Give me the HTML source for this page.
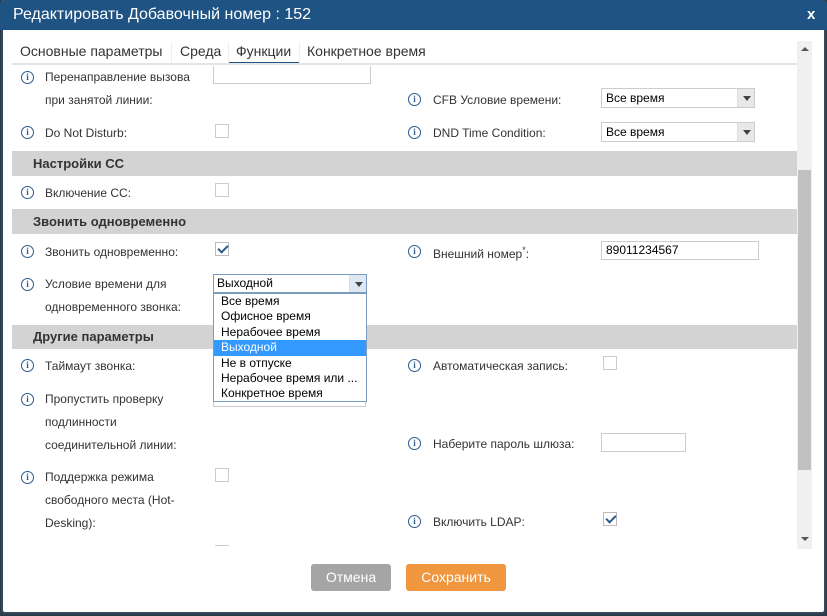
<!DOCTYPE html>
<html><head><meta charset="utf-8"><style>
*{margin:0;padding:0;box-sizing:border-box}
body{width:827px;height:616px;background:#2b3a48;font-family:"Liberation Sans",Arial,sans-serif;font-size:12px;color:#333;position:relative;overflow:hidden}
.dlg{position:absolute;left:1px;top:0;width:825px;height:614px;background:#fff;border:2px solid #34495e;border-top:none;border-radius:0 0 4px 4px}
.hdr{position:absolute;left:0;top:0;width:827px;height:30px;background:#1f5383;color:#fff;font-size:16px;border-radius:4px 4px 0 0}
.a{position:absolute;white-space:nowrap}
.i{position:absolute;width:13px;height:13px;border:1.5px solid #2c5a8a;border-radius:50%;color:#2c5a8a;font-size:9px;font-weight:bold;text-align:center;line-height:10px;font-family:"Liberation Serif",serif}
.sec{position:absolute;left:12px;width:785px;background:#d3d3d3;font-weight:bold;font-size:13px;color:#333;padding-left:21px}
.cb{position:absolute;width:14px;height:14px;border:1px solid #ccc;background:#fff}
.ck{border-color:#bbb}
.ck:after{content:"";position:absolute;left:4px;top:0px;width:4px;height:8px;border:solid #2c5a8a;border-width:0 2px 2px 0;transform:rotate(45deg)}
.sel{position:absolute;height:20px;border:1px solid #ccc;background:#fff;padding:2px 4px;font-size:12px;color:#000}
.sel b{position:absolute;right:0;top:0;width:17px;height:18px;background:#e8e8e8;border-left:1px solid #ddd}
.sel b:after{content:"";position:absolute;left:5px;top:7px;border:4px solid transparent;border-top:5px solid #444;border-bottom:0}
.inp{position:absolute;height:19px;border:1px solid #ccc;background:#fff;padding:1px 4px;color:#000}
.lbl{line-height:23px}
.tab{position:absolute;top:43px;font-size:14px;color:#333;white-space:nowrap}
</style></head><body>
<div class="dlg"></div>
<div class="hdr"><span class="a" style="left:13px;top:6px">Редактировать Добавочный номер : 152</span><span class="a" style="left:807px;top:6px;font-weight:bold;font-size:15px">x</span></div>

<div class="tab" style="left:20px">Основные параметры</div>
<div class="a" style="left:171px;top:42px;width:1px;height:21px;background:#eee"></div>
<div class="tab" style="left:180px">Среда</div>
<div class="a" style="left:228px;top:42px;width:1px;height:21px;background:#eee"></div>
<div class="tab" style="left:236px">Функции</div>
<div class="a" style="left:229px;top:62px;width:70px;height:2px;background:#1f5383"></div>
<div class="a" style="left:299px;top:42px;width:1px;height:21px;background:#eee"></div>
<div class="tab" style="left:307px">Конкретное время</div>
<div class="a" style="left:12px;top:63px;width:785px;height:2px;background:#e5e5e5"></div>

<div class="a" style="left:797px;top:41px;width:15px;height:508px;background:#f0f0f0"></div>
<div class="a" style="left:798px;top:170px;width:13px;height:300px;background:#c1c1c1"></div>
<div class="a" style="left:801px;top:47px;border:4px solid transparent;border-bottom:4px solid #555;border-top:0"></div>
<div class="a" style="left:801px;top:537px;border:4px solid transparent;border-top:4px solid #555;border-bottom:0"></div>

<div class="i" style="left:21px;top:71px">i</div>
<div class="a lbl" style="left:45px;top:66px">Перенаправление вызова<br>при занятой линии:</div>
<div class="inp" style="left:213px;top:66px;width:158px;height:18px;border-top:none"></div>
<div class="i" style="left:408px;top:93px">i</div>
<div class="a" style="left:433px;top:93px">CFB Условие времени:</div>
<div class="sel" style="left:601px;top:88px;width:154px">Все время<b></b></div>

<div class="i" style="left:21px;top:126px">i</div>
<div class="a" style="left:45px;top:126px">Do Not Disturb:</div>
<div class="cb" style="left:215px;top:124px"></div>
<div class="i" style="left:408px;top:126px">i</div>
<div class="a" style="left:433px;top:126px">DND Time Condition:</div>
<div class="sel" style="left:601px;top:122px;width:154px">Все время<b></b></div>

<div class="sec" style="top:151px;height:25px;line-height:25px">Настройки CC</div>
<div class="i" style="left:21px;top:186px">i</div>
<div class="a" style="left:45px;top:186px">Включение CC:</div>
<div class="cb" style="left:215px;top:183px"></div>

<div class="sec" style="top:209px;height:25px;line-height:25px">Звонить одновременно</div>
<div class="i" style="left:21px;top:245px">i</div>
<div class="a" style="left:45px;top:245px">Звонить одновременно:</div>
<div class="cb ck" style="left:215px;top:242px"></div>
<div class="i" style="left:408px;top:245px">i</div>
<div class="a" style="left:433px;top:245px">Внешний номер<sup style="font-size:9px">*</sup>:</div>
<div class="inp" style="left:601px;top:241px;width:158px">89011234567</div>

<div class="i" style="left:21px;top:278px">i</div>
<div class="a lbl" style="left:45px;top:273px">Условие времени для<br>одновременного звонка:</div>

<div class="sec" style="top:325px;height:24px;line-height:24px">Другие параметры</div>
<div class="i" style="left:21px;top:359px">i</div>
<div class="a" style="left:45px;top:359px">Таймаут звонка:</div>
<div class="i" style="left:408px;top:359px">i</div>
<div class="a" style="left:433px;top:359px">Автоматическая запись:</div>
<div class="cb" style="left:603px;top:356px"></div>

<div class="i" style="left:21px;top:393px">i</div>
<div class="a lbl" style="left:45px;top:388px">Пропустить проверку<br>подлинности<br>соединительной линии:</div>
<div class="i" style="left:408px;top:437px">i</div>
<div class="a" style="left:433px;top:437px">Наберите пароль шлюза:</div>
<div class="inp" style="left:601px;top:433px;width:85px"></div>

<div class="i" style="left:21px;top:471px">i</div>
<div class="a lbl" style="left:45px;top:466px">Поддержка режима<br>свободного места (Hot-<br>Desking):</div>
<div class="cb" style="left:215px;top:468px"></div>
<div class="i" style="left:408px;top:515px">i</div>
<div class="a" style="left:433px;top:515px">Включить LDAP:</div>
<div class="cb ck" style="left:603px;top:512px"></div>
<div class="a" style="left:215px;top:545px;width:14px;height:3px;border-top:1px solid #ccc"></div>

<div class="a" style="left:213px;top:389px;width:153px;height:18px;border:1px solid #ccc;background:#fff"></div>
<div class="sel" style="left:213px;top:274px;width:154px;height:19px;padding:1px 3px;border-color:#7a9cc0">Выходной<b style="height:17px;background:#dde8f3"></b></div>
<div class="a" style="left:213px;top:293px;width:154px;height:109px;border:1px solid #7a9cc0;background:#fff;line-height:15.4px;font-size:12px;color:#000">
<div style="padding-left:7px">Все время</div>
<div style="padding-left:7px">Офисное время</div>
<div style="padding-left:7px">Нерабочее время</div>
<div style="padding-left:7px;background:#3399ff;color:#fff">Выходной</div>
<div style="padding-left:7px">Не в отпуске</div>
<div style="padding-left:7px">Нерабочее время или ...</div>
<div style="padding-left:7px">Конкретное время</div>
</div>

<div class="a" style="left:311px;top:564px;width:80px;height:27px;background:#a5a5a5;border-radius:3px;color:#fff;font-size:14px;text-align:center;line-height:27px">Отмена</div>
<div class="a" style="left:406px;top:564px;width:100px;height:27px;background:#f0963e;border-radius:3px;color:#fff;font-size:14px;text-align:center;line-height:27px">Сохранить</div>
</body></html>
